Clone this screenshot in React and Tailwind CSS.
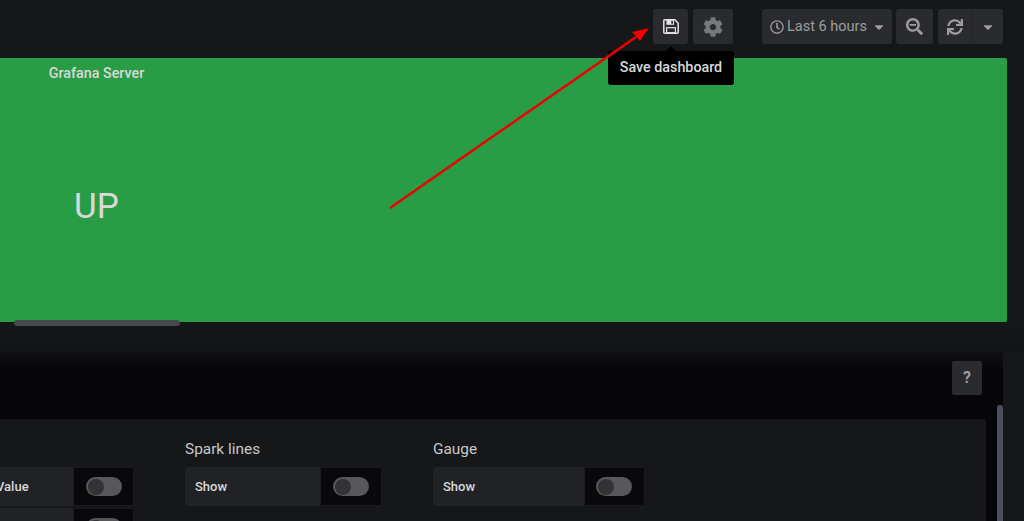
import React from "react";
import { FaCog, FaRegClock, FaSearchMinus, FaSync, FaCaretDown } from "react-icons/fa";

function Btn({ className = "", children }) {
  return (
    <div className={"h-[35px] flex items-center justify-center rounded-[3px] bg-[#2a2b2e] text-[#9d9d9e] " + className}>
      {children}
    </div>
  );
}

function SaveIcon() {
  return (
    <svg width="16" height="15" viewBox="0 0 16 15" fill="none">
      <path d="M1.8 .8H11.8L15.2 4.2V13.2Q15.2 14.2 14.2 14.2H1.8Q.8 14.2 .8 13.2V1.8Q.8 .8 1.8 .8Z" stroke="#e3e3e4" strokeWidth="1.5" />
      <path d="M3.4 1H11V5.8H3.4Z" fill="#e3e3e4" />
      <rect x="8.3" y="1.8" width="1.6" height="3" fill="#2a2b2e" />
      <rect x="3.6" y="8.7" width="8.8" height="5" stroke="#e3e3e4" strokeWidth="1.2" />
    </svg>
  );
}

function Toggle({ label, labelW, switchW, labelCls = "", switchCls = "" }) {
  return (
    <div className="flex h-[39px] rounded-[3px]">
      <div className={"flex items-center bg-[#202226] text-[13px] font-medium text-[#d8d9da] rounded-l-[3px] " + labelCls} style={{ width: labelW }}>
        {label}
      </div>
      <div className={"flex items-center justify-center bg-[#09090b] rounded-r-[3px] border border-[#1a1b1d] " + switchCls} style={{ width: switchW }}>
        <div className="relative h-[19px] w-[36px] rounded-full bg-[#58585a]">
          <div className="absolute left-[2px] top-[1.5px] h-[16px] w-[16px] rounded-full bg-[#333335]" />
        </div>
      </div>
    </div>
  );
}

export default function App() {
  return (
    <div className="relative h-[521px] w-[1024px] overflow-hidden bg-[#161719] font-['Roboto',sans-serif]">
      <header className="flex h-[58px] justify-end pt-[9px] pr-[21px]">
        <Btn className="w-[35px]"><SaveIcon /></Btn>
        <Btn className="ml-[5px] w-[40px] text-[20px] text-[#77787a]"><FaCog /></Btn>
        <Btn className="ml-[29px] w-[130px] gap-[3px] pl-[2px] text-[14.5px] text-[#8e8e90]">
          <FaRegClock className="text-[14px]" />
          <span>Last 6 hours</span>
          <FaCaretDown className="ml-[2px] text-[14px]" />
        </Btn>
        <Btn className="ml-[4px] w-[37px] text-[17px]"><FaSearchMinus /></Btn>
        <Btn className="ml-[5px] w-[65px] text-[#8e8e90]">
          <div className="flex h-full w-[34px] items-center justify-center border-r border-[#252628] text-[16px]"><FaSync /></div>
          <div className="flex h-full flex-1 items-center justify-center text-[14px]"><FaCaretDown /></div>
        </Btn>
      </header>

      <section className="mr-[17px] h-[264px] rounded-r-[2px] bg-[#299c46] text-[#d8d9da]">
        <div className="w-[193px] pt-[7px] text-center text-[14.3px] leading-[17px] font-medium">Grafana Server</div>
        <div className="mt-[106px] w-[193px] text-center text-[35px] leading-[38px]">UP</div>
      </section>

      <div className="relative h-[30px] bg-gradient-to-b from-[#161719] to-[#121315]">
        <div className="absolute left-[14px] top-[-2px] h-[6px] w-[166px] rounded-[3px] bg-[#47484b]" />
      </div>

      <section className="relative mr-[21px] h-[169px] bg-gradient-to-b from-[#101012] to-[#060608] to-[12%] pt-[67px]">
        <div className="mr-[17px] h-full overflow-hidden rounded-tr-[2px] bg-[#161719] pt-[21px]">
          <div className="flex gap-[51px] pl-[185px]">
            <div className="-ml-[236px] flex w-[185px] flex-col gap-[2px] pt-[27px]">
              <Toggle label={<span className="pl-[47px]">Value</span>} labelW={124} switchW={61} />
              <Toggle label="" labelW={124} switchW={61} />
            </div>
            <div>
              <div className="mb-[8px] text-[15.4px] leading-[19px] text-[#c7c7c9]">Spark lines</div>
              <Toggle label="Show" labelW={135} switchW={62} labelCls="pl-[10px]" />
            </div>
            <div>
              <div className="mb-[8px] text-[15.4px] leading-[19px] text-[#c7c7c9]">Gauge</div>
              <Toggle label="Show" labelW={151} switchW={61} labelCls="pl-[10px]" switchCls="pr-[2px]" />
            </div>
          </div>
        </div>
        <div className="absolute right-[0px] top-[53px] h-[130px] w-[6px] rounded-[3px] bg-[#4d4f60]" />
        <div className="absolute right-[21px] top-[9px] flex h-[34px] w-[30px] items-center justify-center rounded-[2px] bg-[#2a2b2e] text-[16px] font-bold text-[#9d9d9e]">?</div>
      </section>

      <div className="absolute left-[608px] top-[51px] flex h-[34px] w-[126px] items-center justify-center rounded-[3px] bg-black text-[14.3px] font-medium text-[#d8d9da]">
        Save dashboard
        <div className="absolute left-[58px] top-[-5px] h-0 w-0 border-x-[5px] border-b-[5px] border-x-transparent border-b-black" />
      </div>

      <svg className="absolute left-0 top-0" width="1024" height="521" viewBox="0 0 1024 521" fill="none">
        <line x1="390" y1="208" x2="636" y2="37" stroke="#f00000" strokeWidth="2.5" />
        <polygon points="649,28 632,32 640,41" fill="#f00000" />
      </svg>
    </div>
  );
}
